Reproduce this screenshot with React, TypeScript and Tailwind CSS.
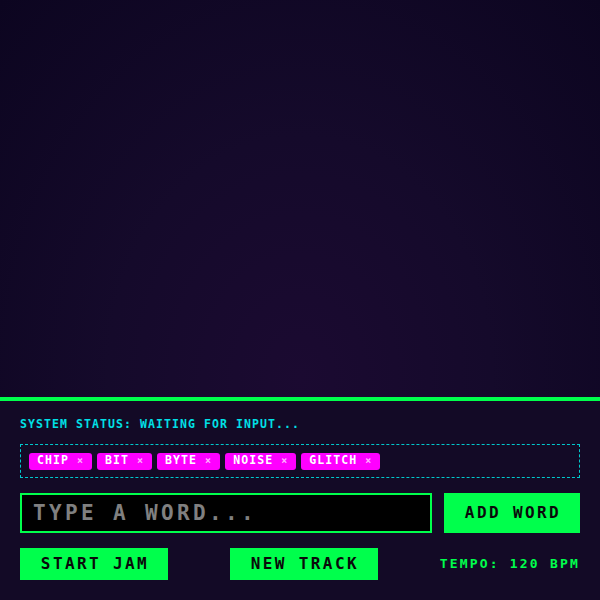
import { useState } from 'react';

const initialWords = ['CHIP', 'BIT', 'BYTE', 'NOISE', 'GLITCH'];

export default function App() {
  const [words, setWords] = useState<string[]>(initialWords);
  const [draft, setDraft] = useState('');

  const addWord = () => {
    const w = draft.trim().toUpperCase();
    if (w) {
      setWords([...words, w]);
      setDraft('');
    }
  };

  return (
    <div className="h-screen w-full flex flex-col font-['DejaVu_Sans_Mono','Liberation_Mono',monospace] font-bold">
      {/* Stage */}
      <div className="flex-1 bg-[radial-gradient(ellipse_at_50%_95%,#1b0a31_0%,#150a2b_45%,#0c0520_100%)]" />

      {/* Control panel */}
      <div className="border-t-4 border-[#00ff4c] bg-[#130a26] px-5 pt-4 pb-5 flex flex-col">
        <div className="h-[14px] leading-[14px] text-[11.5px] tracking-[1.08px] text-[#00e0e6]">
          SYSTEM STATUS: WAITING FOR INPUT...
        </div>

        <div className="mt-[13px] h-[34px] border border-dashed border-[#00c8cc] px-2 flex items-center gap-[5px]">
          {words.map((w, i) => (
            <span
              key={w + i}
              className="h-[17px] flex items-center bg-[#ff00ff] rounded-[3px] pl-2 pr-[9px] text-white text-[11.5px] tracking-[1.08px]"
            >
              {w}
              <button
                onClick={() => setWords(words.filter((_, j) => j !== i))}
                className="ml-2 text-[10px] leading-none tracking-normal text-[#ffb0ff]"
              >
                ×
              </button>
            </span>
          ))}
        </div>

        <div className="mt-[15px] flex gap-3">
          <input
            type="text"
            value={draft}
            onChange={(e) => setDraft(e.target.value)}
            placeholder="TYPE A WORD..."
            className="flex-1 h-10 bg-black border-2 border-[#00ff4c] px-[11px] text-[21px] tracking-[3.36px] text-[#00ff4c] placeholder:text-[#808080] outline-none"
          />
          <button
            onClick={addWord}
            className="w-[136px] h-10 bg-[#00ff4c] text-[#0a0a0a] text-[16px] tracking-[2.4px] pl-[2px] flex items-center justify-center"
          >
            ADD WORD
          </button>
        </div>

        <div className="mt-[15px] flex items-center justify-between">
          <button className="w-[148px] h-8 bg-[#00ff4c] text-[#0a0a0a] text-[16px] tracking-[2.4px] pl-[2px] flex items-center justify-center">
            START JAM
          </button>
          <button className="w-[148px] h-8 bg-[#00ff4c] text-[#0a0a0a] text-[16px] tracking-[2.4px] pl-[2px] flex items-center justify-center">
            NEW TRACK
          </button>
          <div className="text-[13px] tracking-[2.2px] text-[#00ff4c]">TEMPO: 120 BPM</div>
        </div>
      </div>
    </div>
  );
}
